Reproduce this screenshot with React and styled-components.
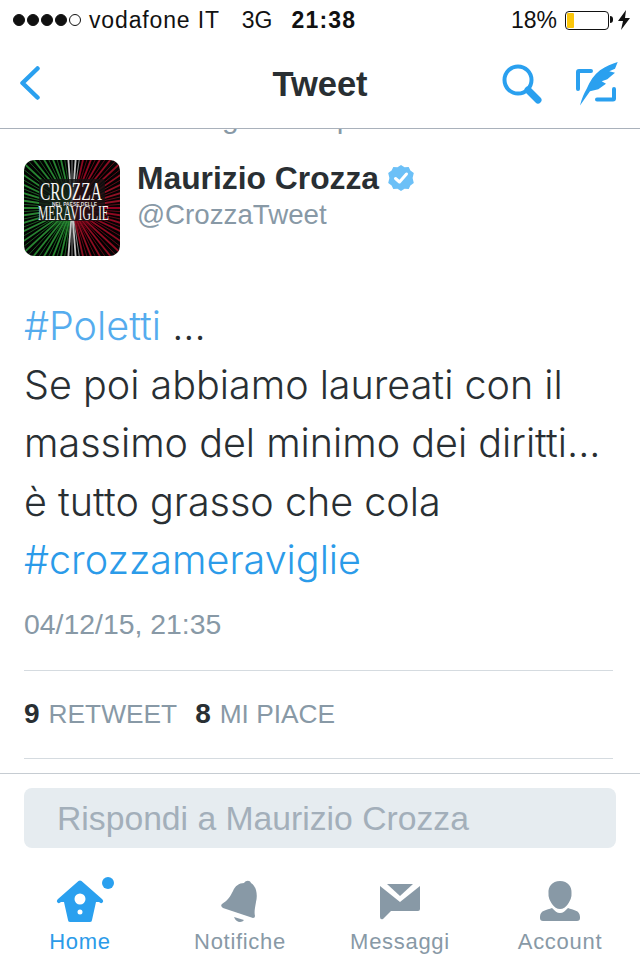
import React from 'react'
import styled, { createGlobalStyle } from 'styled-components'

const GlobalStyle = createGlobalStyle`
  html, body { margin: 0; padding: 0; background: #fff; }
  body { font-family: "Liberation Sans", Arial, sans-serif; }
`

const Page = styled.div`
  width: 640px;
  height: 960px;
  overflow: hidden;
  display: flex;
  flex-direction: column;
  background: #fff;
`

const StatusBar = styled.div`
  height: 40px;
  padding: 0 10px 0 13px;
  display: flex;
  align-items: center;
  font-size: 23px;
  color: #111;
  box-sizing: border-box;
`
const Dots = styled.div`
  display: flex;
  gap: 2px;
  margin-right: 8px;
`
const Dot = styled.span`
  width: 12px;
  height: 12px;
  border-radius: 50%;
  box-sizing: border-box;
  border: 1px solid #111;
  background: ${p => (p.$on ? '#111' : 'transparent')};
`
const Carrier = styled.span`
  margin-right: 22px;
  letter-spacing: 0.85px;
`
const Network = styled.span`
  margin-right: 19px;
`
const Time = styled.span`
  font-weight: 700;
  letter-spacing: 1.2px;
`
const BatteryGroup = styled.div`
  margin-left: auto;
  display: flex;
  align-items: center;
`
const Percent = styled.span`
  margin-right: 8px;
`
const Battery = styled.div`
  width: 44px;
  height: 19px;
  box-sizing: border-box;
  border: 1.5px solid #111;
  border-radius: 4px;
  padding: 1px;
  position: relative;
  &::before {
    content: '';
    display: block;
    width: 7px;
    height: 100%;
    background: #fbc60a;
    border-radius: 1px;
  }
  &::after {
    content: '';
    position: absolute;
    right: -5px;
    top: 4px;
    width: 3px;
    height: 7px;
    background: #111;
    border-radius: 0 3px 3px 0;
  }
`
const Bolt = styled.svg`
  margin-left: 9px;
  width: 12px;
  height: 20px;
`

const NavBar = styled.div`
  height: 89px;
  box-sizing: border-box;
  border-bottom: 1px solid #a9b1bb;
  padding: 0 20px;
  display: grid;
  grid-template-columns: 1fr auto 1fr;
  align-items: center;
`
const NavTitle = styled.div`
  font-size: 34.5px;
  font-weight: 700;
  color: #292f33;
`
const NavRight = styled.div`
  display: flex;
  justify-content: flex-end;
  align-items: center;
  gap: 33px;
`

const Clipped = styled.div`
  height: 6px;
  overflow: hidden;
  flex-shrink: 0;
  color: #8899a6;
  font-size: 30px;
  line-height: 6px;
`
const ClippedGlyphs = styled.div`
  display: flex;
  margin-top: -14px;
  padding-left: 222px;
  gap: 98px;
`

const Tweet = styled.div`
  padding: 25px 27px 0 24px;
  flex: 1;
`
const Author = styled.div`
  display: flex;
  gap: 17px;
`
const Avatar = styled.svg`
  width: 96px;
  height: 96px;
  border-radius: 10px;
  display: block;
`
const NameRow = styled.div`
  display: flex;
  align-items: center;
  gap: 8px;
  height: 36px;
`
const Name = styled.div`
  font-size: 31.8px;
  font-weight: 700;
  color: #292f33;
`
const Handle = styled.div`
  font-size: 27.7px;
  color: #8899a6;
  line-height: 38px;
`
const Body = styled.div`
  margin-top: 41px;
  font-family: Inter, "Liberation Sans", sans-serif;
  font-weight: 300;
  font-size: 39.5px;
  line-height: 58.5px;
  color: #292f33;
  white-space: nowrap;
`
const Hashtag = styled.span`
  color: ${p => (p.$light ? '#55acee' : '#2b9be9')};
`
const Stamp = styled.div`
  margin-top: 16px;
  font-size: 28.4px;
  line-height: 36px;
  color: #8899a6;
`
const Stats = styled.div`
  margin-top: 28px;
  height: 87px;
  border-top: 1px solid #d5dbe0;
  border-bottom: 1px solid #d5dbe0;
  display: flex;
  align-items: center;
  gap: 18px;
  font-size: 26.3px;
  color: #8899a6;
`
const Stat = styled.div`
  b {
    color: #292f33;
    font-size: 28px;
    font-weight: 700;
    margin-right: 9px;
  }
`

const ReplyBar = styled.div`
  border-top: 1px solid #c6ccd2;
  padding: 14px 24px 0;
  height: 75px;
  box-sizing: border-box;
`
const ReplyBox = styled.div`
  height: 60px;
  border-radius: 8px;
  background: #e6ecf0;
  color: #a3afba;
  font-size: 33.7px;
  line-height: 60px;
  padding-left: 33px;
  box-sizing: border-box;
`

const TabBar = styled.div`
  height: 112px;
  flex-shrink: 0;
  display: grid;
  grid-template-columns: repeat(4, 160px);
`
const Tab = styled.div`
  display: flex;
  flex-direction: column;
  align-items: center;
  padding-top: 32px;
  font-size: 22px;
  color: ${p => (p.$active ? '#2b9be9' : '#8899a6')};
  svg {
    width: 80px;
    height: 48px;
    display: block;
    overflow: visible;
  }
  span {
    margin-top: 1px;
    line-height: 26px;
    letter-spacing: 0.7px;
  }
`

const blue = '#2aa0ef'
const grey = '#8899a6'

function BackIcon() {
  return (
    <svg width="20" height="36" viewBox="0 0 20 36" style={{ display: 'block' }}>
      <path d="M17.5 2.5 L2.5 17 L17.5 31.5" fill="none" stroke={blue} strokeWidth="4.5" strokeLinecap="round" strokeLinejoin="round" />
    </svg>
  )
}

function SearchIcon() {
  return (
    <svg width="42" height="42" viewBox="0 0 42 42" style={{ display: 'block' }}>
      <circle cx="17" cy="17" r="13.5" fill="none" stroke={blue} strokeWidth="4" />
      <path d="M27 27 L37 37" stroke={blue} strokeWidth="7" strokeLinecap="round" />
    </svg>
  )
}

function ComposeIcon() {
  return (
    <svg width="44" height="44" viewBox="0 0 44 44" style={{ display: 'block' }}>
      <path d="M2 27 V10 Q2 9 3 9 H15 M21 37.5 H37 Q38 37.5 38 36.5 V27" fill="none" stroke={blue} strokeWidth="4" strokeLinecap="round" />
      <path d="M4 43.5 C6 36 8 31 10.7 26.7 C14 19 18 13 24 8.3 C30 4 36 2 41.7 0 L39 6.7 L33.3 9.3 L39 10.7 L31.3 17.3 L25.7 19.3 L30 21.7 L22.3 27.3 L14 29.3 Z" fill={blue} />
    </svg>
  )
}

function HomeIcon() {
  return (
    <svg viewBox="0 0 80 48">
      <path fillRule="evenodd" fill={blue} d="M38.5 1 Q40 0 41.5 1 L62 19 Q64 21 62.5 22.5 Q61 24 59 22 L56 22 L52 40 Q52 42 50 42 H30 Q28 42 28 40 L24 22 L21 22 Q19 24 17.5 22.5 Q16 21 18 19 Z M40 13.5 A5.5 5.5 0 1 0 40 24.5 A5.5 5.5 0 1 0 40 13.5 Z M40 29.5 A2.5 2.5 0 1 0 40 34.5 A2.5 2.5 0 1 0 40 29.5 Z" />
      <circle cx="68" cy="3" r="6" fill={blue} />
    </svg>
  )
}

function BellIcon() {
  return (
    <svg viewBox="0 0 80 48">
      <path fill={grey} d="M44 3 C46 0 50 0 51 3 C56 6 58 14 56 22 C55 28 54 32 55 36 Q55 38 53 38 L23 28 Q20 26 22 24 C28 20 30 17 33 11 C35 6 39 3 44 3 Z" />
      <path fill={grey} d="M34 37 L44 40 C42 43 36 43 34 37 Z" />
    </svg>
  )
}

function MailIcon() {
  return (
    <svg viewBox="0 0 80 48">
      <path fill={grey} d="M20 6 L40 22 L60 6 V29 Q60 31 58 31 H31 L23 39 Q20 40 20 37 Z" />
      <path fill={grey} d="M27 4 H53 L40 16 Z" />
    </svg>
  )
}

function AccountIcon() {
  return (
    <svg viewBox="0 0 80 48">
      <path fill={grey} d="M40 1 C32 1 28 7 28.5 13 C28 17 30 21 32 24 C34 27 37 29 40 29 C43 29 46 27 48 24 C50 21 52 17 51.5 13 C52 7 48 1 40 1 Z" />
      <path fill={grey} d="M32 28 C35 31 37 33 40 33 C43 33 45 31 48 28 C53 30 60 30 60 37 V38 Q60 41 57 41 H23 Q20 41 20 38 V37 C20 30 27 30 32 28 Z" />
    </svg>
  )
}

function VerifiedBadge() {
  return (
    <svg width="28" height="28" viewBox="0 0 28 28">
      <path fill="#6cc0f7" d="M14 1 L17.5 3.3 L21.7 2.9 L23.4 6.6 L26.8 9 L25.6 13.9 L26.8 18.9 L23.4 21.4 L21.7 25 L17.5 24.7 L14 27 L10.5 24.7 L6.3 25 L4.6 21.4 L1.2 18.9 L2.4 13.9 L1.2 9 L4.6 6.6 L6.3 2.9 L10.5 3.3 Z" />
      <path d="M8.5 14.5 L12.5 18 L19.5 10" fill="none" stroke="#fff" strokeWidth="3" strokeLinecap="round" strokeLinejoin="round" />
    </svg>
  )
}

// rays fanning out from the centre of the logo
const rays = Array.from({ length: 84 }, (_, i) => {
  const a = (i / 84) * Math.PI * 2
  const side = Math.cos(a)
  let color = '#e8e8e8'
  if (side < -0.1) color = '#2f9a3c'
  if (side > 0.22) color = '#a5142a'
  return {
    x: 48 + side * 90,
    y: 48 + Math.sin(a) * 90,
    color,
    wide: i % 2 === 0,
  }
})

function CrozzaLogo() {
  return (
    <Avatar viewBox="0 0 96 96">
      <rect width="96" height="96" fill="#0c0c0c" />
      {rays.map((r, i) => (
        <line key={i} x1="48" y1="48" x2={r.x} y2={r.y} stroke={r.color} strokeWidth={r.wide ? 1.8 : 0.7} opacity="0.85" />
      ))}
      <rect x="15" y="19" width="66" height="42" rx="3" fill="#111" opacity="0.8" />
      <text x="16" y="40" fontFamily="Liberation Serif, serif" fontSize="26" fill="#f4f4f4" textLength="62" lengthAdjust="spacingAndGlyphs">CROZZA</text>
      <text x="28" y="46" fontFamily="Liberation Sans, sans-serif" fontSize="5" fontWeight="700" fill="#ddd" textLength="45" lengthAdjust="spacingAndGlyphs">NEL PAESE DELLE</text>
      <text x="14" y="60" fontFamily="Liberation Serif, serif" fontSize="20" fill="#f4f4f4" textLength="71" lengthAdjust="spacingAndGlyphs">MERAVIGLIE</text>
    </Avatar>
  )
}

export default function App() {
  return (
    <Page>
      <GlobalStyle />
      <StatusBar>
        <Dots>
          {[1, 1, 1, 1, 0].map((on, i) => <Dot key={i} $on={!!on} />)}
        </Dots>
        <Carrier>vodafone IT</Carrier>
        <Network>3G</Network>
        <Time>21:38</Time>
        <BatteryGroup>
          <Percent>18%</Percent>
          <Battery />
          <Bolt viewBox="0 0 12 20">
            <path d="M8 0 L0 11 H5 L3 20 L12 8 H7 Z" fill="#111" />
          </Bolt>
        </BatteryGroup>
      </StatusBar>

      <NavBar>
        <BackIcon />
        <NavTitle>Tweet</NavTitle>
        <NavRight>
          <SearchIcon />
          <ComposeIcon />
        </NavRight>
      </NavBar>

      <Clipped>
        <ClippedGlyphs><span>g</span><span>p</span></ClippedGlyphs>
      </Clipped>

      <Tweet>
        <Author>
          <CrozzaLogo />
          <div>
            <NameRow>
              <Name>Maurizio Crozza</Name>
              <VerifiedBadge />
            </NameRow>
            <Handle>@CrozzaTweet</Handle>
          </div>
        </Author>
        <Body>
          <Hashtag $light>#Poletti</Hashtag> ...<br />
          Se poi abbiamo laureati con il<br />
          massimo del minimo dei diritti...<br />
          è tutto grasso che cola<br />
          <Hashtag>#crozzameraviglie</Hashtag>
        </Body>
        <Stamp>04/12/15, 21:35</Stamp>
        <Stats>
          <Stat><b>9</b>RETWEET</Stat>
          <Stat><b>8</b>MI PIACE</Stat>
        </Stats>
      </Tweet>

      <ReplyBar>
        <ReplyBox>Rispondi a Maurizio Crozza</ReplyBox>
      </ReplyBar>

      <TabBar>
        <Tab $active><HomeIcon /><span>Home</span></Tab>
        <Tab><BellIcon /><span>Notifiche</span></Tab>
        <Tab><MailIcon /><span>Messaggi</span></Tab>
        <Tab><AccountIcon /><span>Account</span></Tab>
      </TabBar>
    </Page>
  )
}
